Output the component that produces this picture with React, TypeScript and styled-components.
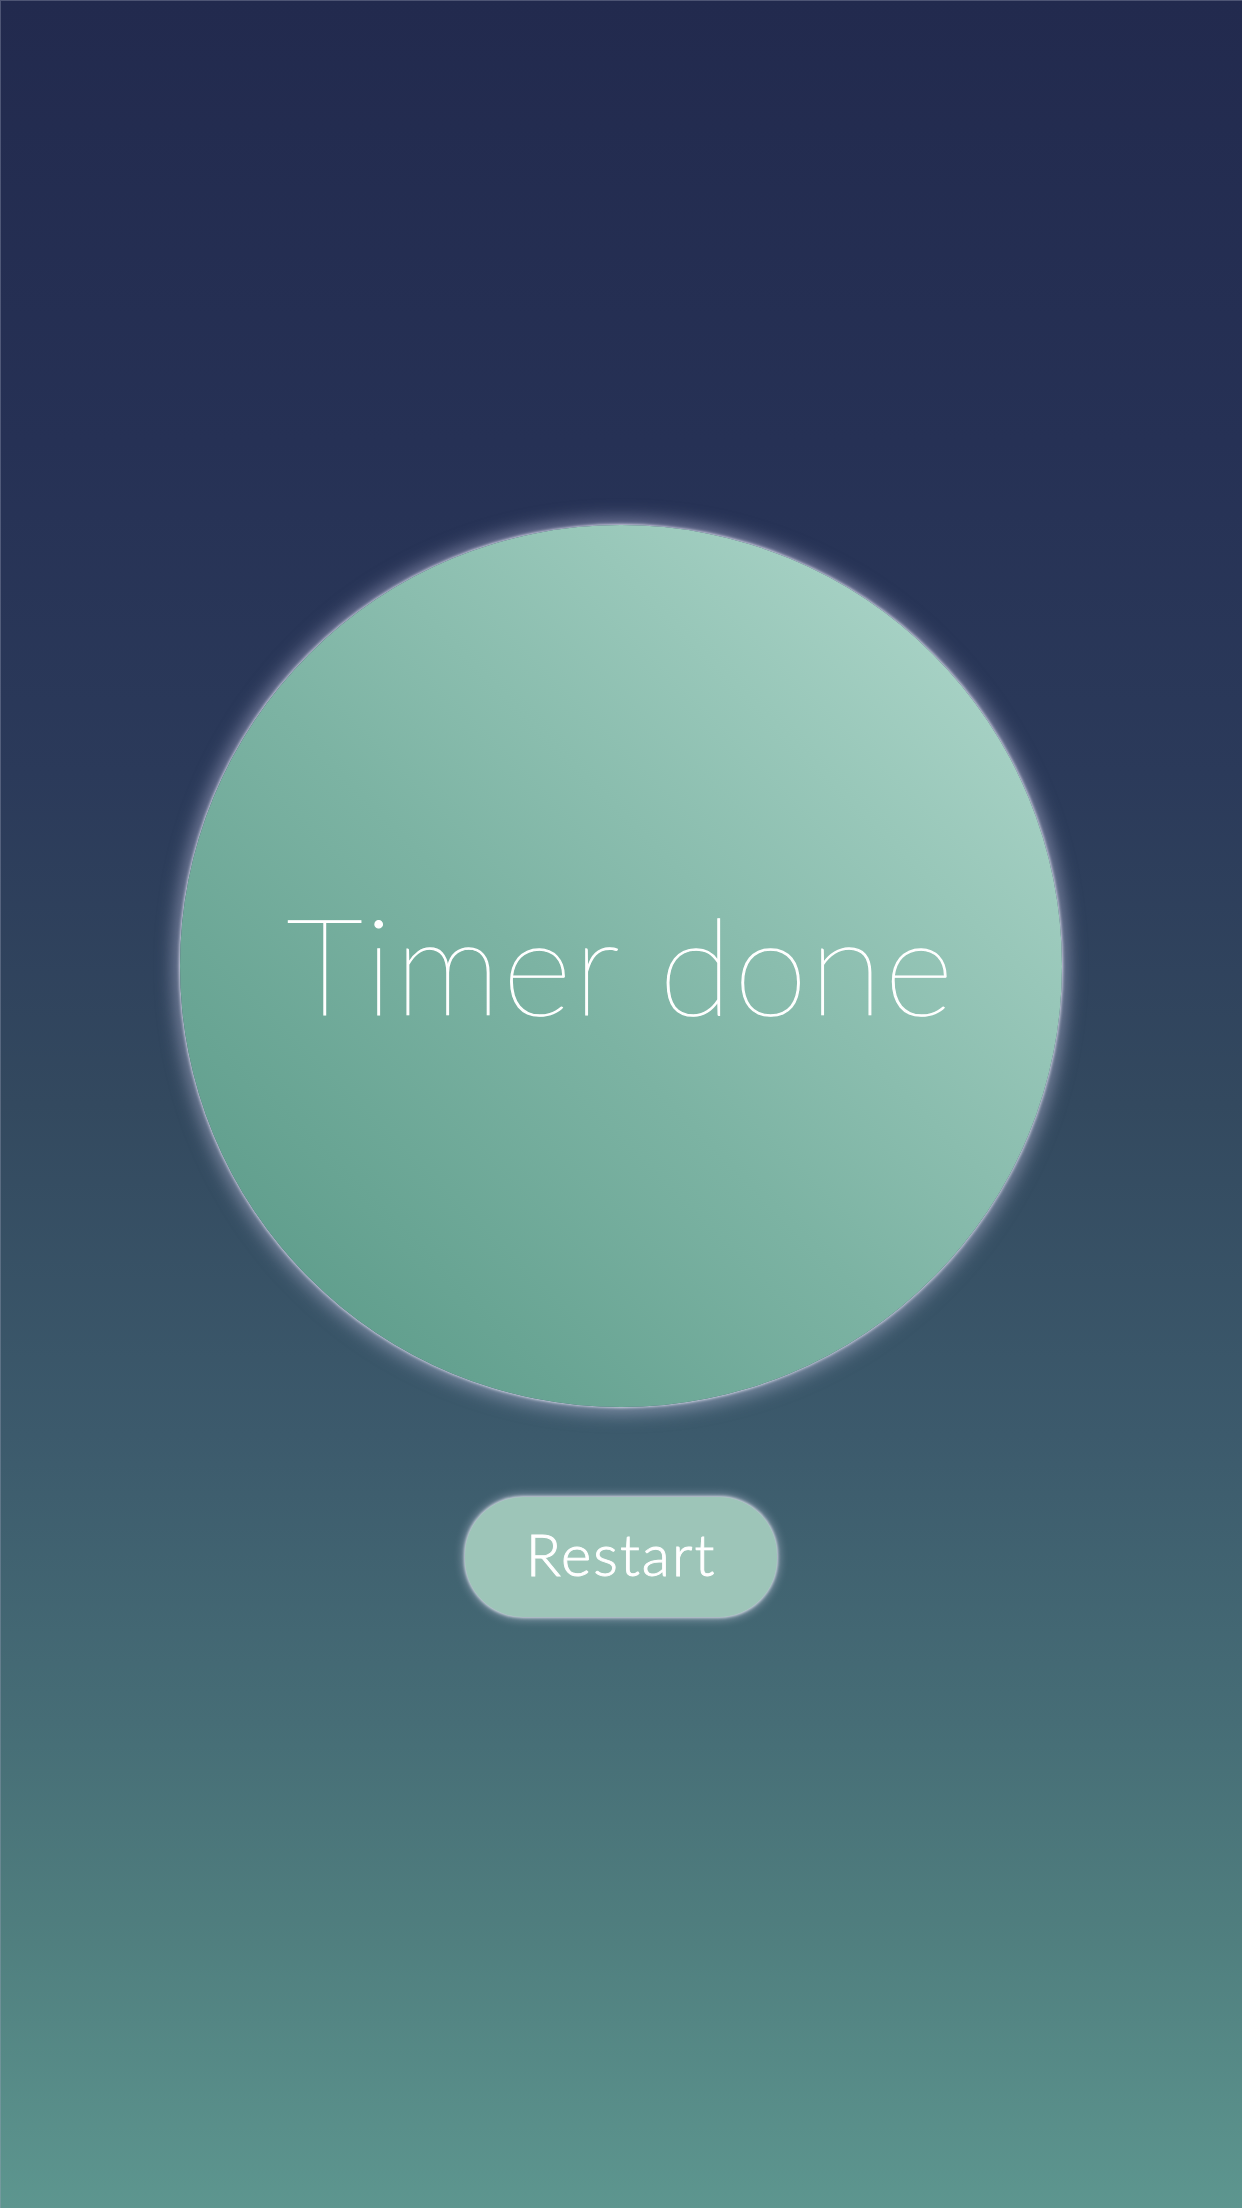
import React from "react";
import styled, { createGlobalStyle } from "styled-components";

const GlobalStyle = createGlobalStyle`
  html, body {
    margin: 0;
    padding: 0;
  }
  body {
    font-family: "Lato", "Open Sans", sans-serif;
  }
`;

const Screen = styled.div`
  box-sizing: border-box;
  width: 1242px;
  min-height: 2208px;
  display: flex;
  flex-direction: column;
  align-items: center;
  padding-top: 525px;
  gap: 90px;
  background: linear-gradient(
    180deg,
    #222a4e 0%,
    #263155 20%,
    #2b3a5a 35%,
    #33495f 50%,
    #3c5a6c 65%,
    #466d76 78%,
    #507f7f 88%,
    #5d968f 100%
  );
  box-shadow: inset 1px 1px 0 rgba(160, 165, 190, 0.35);
`;

const Dial = styled.div`
  width: 882px;
  height: 882px;
  border-radius: 50%;
  display: flex;
  align-items: center;
  justify-content: center;
  background: linear-gradient(45deg, #559684 0%, #7cb3a3 45%, #b4dbcf 100%);
  box-shadow: 0 0 3px 1px rgba(230, 230, 245, 0.8),
    0 0 18px 6px rgba(200, 200, 230, 0.5);
`;

const Title = styled.h1`
  margin: 0;
  margin-top: -4px;
  font-family: "Lato", "Open Sans", sans-serif;
  font-weight: 100;
  font-size: 134px;
  letter-spacing: 2px;
  color: #ffffff;
  -webkit-text-stroke: 1.2px #ffffff;
  line-height: 1;
`;

const RestartButton = styled.button`
  width: 312px;
  height: 120px;
  border: none;
  border-radius: 58px;
  background: #9dc5b8;
  color: #ffffff;
  font-family: "Lato", "Open Sans", sans-serif;
  font-weight: 300;
  font-size: 58px;
  letter-spacing: 2px;
  -webkit-text-stroke: 0.9px #ffffff;
  padding: 0 0 8px 0;
  cursor: pointer;
  box-shadow: 0 0 3px 1px rgba(230, 232, 240, 0.8),
    0 0 9px 3px rgba(200, 205, 225, 0.45);
`;

export default function App() {
  return (
    <>
      <GlobalStyle />
      <Screen>
        <Dial>
          <Title>Timer done</Title>
        </Dial>
        <RestartButton>Restart</RestartButton>
      </Screen>
    </>
  );
}
